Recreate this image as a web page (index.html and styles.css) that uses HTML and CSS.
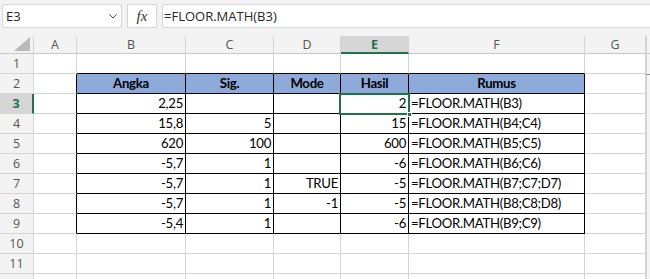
FILE: index.html
```html
<!DOCTYPE html>
<html>
<head>
<meta charset="utf-8">
<link rel="stylesheet" href="styles.css">
</head>
<body>
<div class="topbar">
  <div class="namebox"><span>E3</span>
    <svg class="chev" width="8" height="5" viewBox="0 0 8 5"><path d="M0.5 0.5 L4 4 L7.5 0.5" fill="none" stroke="#444" stroke-width="1"/></svg>
  </div>
  <div class="fxbox"><span class="fx">fx</span></div>
  <div class="formula">=FLOOR.MATH(B3)</div>
</div>
<div class="sheet">
  <div class="corner"><svg width="16" height="14" viewBox="0 0 16 14"><path d="M16 0 L16 14 L0 14 Z" fill="#b9b9b9"/></svg></div>
  <div class="ch">A</div><div class="ch">B</div><div class="ch">C</div><div class="ch">D</div><div class="ch sel">E</div><div class="ch">F</div><div class="ch">G</div><div class="strip sh"></div>

  <div class="rh">1</div><div class="c"></div><div class="c bt"></div><div class="c bt"></div><div class="c bt"></div><div class="c bt"></div><div class="c bt"></div><div class="c"></div><div class="strip"></div>

  <div class="rh">2</div><div class="c bl"></div><div class="c t hd">Angka</div><div class="c t hd">Sig.</div><div class="c t hd">Mode</div><div class="c t hd">Hasil</div><div class="c t hd">Rumus</div><div class="c"></div><div class="strip mark"></div>

  <div class="rh rsel">3</div><div class="c bl"></div><div class="c t r">2,25</div><div class="c t r"></div><div class="c t r"></div><div class="c t r active">2<span class="handle"></span></div><div class="c t">=FLOOR.MATH(B3)</div><div class="c"></div><div class="strip"></div>

  <div class="rh">4</div><div class="c bl"></div><div class="c t r">15,8</div><div class="c t r">5</div><div class="c t r"></div><div class="c t r">15</div><div class="c t">=FLOOR.MATH(B4;C4)</div><div class="c"></div><div class="strip"></div>

  <div class="rh">5</div><div class="c bl"></div><div class="c t r">620</div><div class="c t r">100</div><div class="c t r"></div><div class="c t r">600</div><div class="c t">=FLOOR.MATH(B5;C5)</div><div class="c"></div><div class="strip"></div>

  <div class="rh">6</div><div class="c bl"></div><div class="c t r">-5,7</div><div class="c t r">1</div><div class="c t r"></div><div class="c t r">-6</div><div class="c t">=FLOOR.MATH(B6;C6)</div><div class="c"></div><div class="strip"></div>

  <div class="rh">7</div><div class="c bl"></div><div class="c t r">-5,7</div><div class="c t r">1</div><div class="c t r">TRUE</div><div class="c t r">-5</div><div class="c t">=FLOOR.MATH(B7;C7;D7)</div><div class="c"></div><div class="strip"></div>

  <div class="rh">8</div><div class="c bl"></div><div class="c t r">-5,7</div><div class="c t r">1</div><div class="c t r">-1</div><div class="c t r">-5</div><div class="c t">=FLOOR.MATH(B8;C8;D8)</div><div class="c"></div><div class="strip"></div>

  <div class="rh">9</div><div class="c bl"></div><div class="c t r">-5,4</div><div class="c t r">1</div><div class="c t r"></div><div class="c t r">-6</div><div class="c t">=FLOOR.MATH(B9;C9)</div><div class="c"></div><div class="strip"></div>

  <div class="rh">10</div><div class="c"></div><div class="c"></div><div class="c"></div><div class="c"></div><div class="c"></div><div class="c"></div><div class="c"></div><div class="strip"></div>

  <div class="rh">11</div><div class="c"></div><div class="c"></div><div class="c"></div><div class="c"></div><div class="c"></div><div class="c"></div><div class="c"></div><div class="strip"></div>

  <div class="rh"></div><div class="c"></div><div class="c"></div><div class="c"></div><div class="c"></div><div class="c"></div><div class="c"></div><div class="c"></div><div class="strip"></div>
</div>
</body>
</html>
```

FILE: styles.css
```css
* { box-sizing: border-box; }
html, body { margin: 0; padding: 0; }
body {
  width: 650px;
  height: 279px;
  overflow: hidden;
  background: #ffffff;
  font-family: "Open Sans", "Noto Sans", sans-serif;
  color: #222;
}
.topbar {
  height: 36px;
  background: #f3f3f3;
  display: flex;
  align-items: flex-start;
  padding: 4px 0 0 2px;
  gap: 5px;
}
.namebox {
  width: 120px;
  height: 24px;
  background: #fff;
  border: 1px solid #d6d6d6;
  display: flex;
  align-items: center;
  justify-content: space-between;
  padding: 0 4px 0 3px;
  font-size: 13px;
  color: #262626;
}
.chev { margin-top: 1px; }
.fxbox {
  width: 30px;
  height: 24px;
  background: #fff;
  border: 1px solid #d6d6d6;
  display: flex;
  align-items: center;
  justify-content: center;
}
.fx {
  font-family: "Liberation Serif", "DejaVu Serif", serif;
  font-style: italic;
  font-size: 15px;
  color: #333;
}
.formula {
  flex: 1;
  height: 24px;
  background: #fff;
  border: 1px solid #d6d6d6;
  border-right: none;
  display: flex;
  align-items: center;
  padding-left: 1px;
  font-size: 13px;
  color: #262626;
}
.sheet {
  display: grid;
  grid-template-columns: 34px 43px 109px 88px 67px 68px 176px 61px 4px;
  grid-template-rows: 18px repeat(12, 20px);
}
.corner {
  background: #f3f3f3;
  border-right: 1px solid #d4d4d4;
  border-bottom: 1px solid #c8c8c8;
  display: flex;
  align-items: flex-end;
  justify-content: flex-end;
  padding: 0 3px 2px 0;
}
.ch {
  background: #f3f3f3;
  border-right: 1px solid #d4d4d4;
  border-bottom: 1px solid #c8c8c8;
  display: flex;
  align-items: center;
  justify-content: center;
  font-size: 12.5px;
  color: #555;
}
.ch.sel {
  background: #d6d6d6;
  border-bottom: 2px solid #217346;
  color: #217346;
  font-weight: 700;
}
.rh {
  background: #f3f3f3;
  border-right: 1px solid #d4d4d4;
  border-bottom: 1px solid #d4d4d4;
  display: flex;
  align-items: center;
  justify-content: center;
  font-size: 12.5px;
  color: #555;
}
.rh.rsel {
  background: #d6d6d6;
  border-right: 2px solid #217346;
  color: #217346;
  font-weight: 700;
}
.strip {
  background: #f5f5f5;
  border-left: 1px solid #d4d4d4;
}
.strip.sh { border-bottom: 1px solid #c8c8c8; }
.strip.mark { border-top: 1px solid #8a8a8a; }
.c {
  border-right: 1px solid #d4d4d4;
  border-bottom: 1px solid #d4d4d4;
  display: flex;
  align-items: flex-end;
  padding: 0 2px 1px 2px;
  font-family: "Lato", "Liberation Sans", sans-serif;
  font-size: 13.2px;
  letter-spacing: -0.3px;
  line-height: 18px;
  color: #000;
  white-space: nowrap;
}
.c.r { justify-content: flex-end; }
.c.t { border-right-color: #000; border-bottom-color: #000; }
.c.bl { border-right-color: #000; }
.c.bt { border-bottom-color: #000; }
.c.hd {
  background: #8eaadb;
  justify-content: center;
  font-weight: 700;
}
.active { position: relative; }
.active::before {
  content: "";
  position: absolute;
  left: -2px;
  top: -1px;
  right: -2px;
  bottom: -2px;
  border: 2px solid #217346;
}
.handle {
  position: absolute;
  right: -4px;
  bottom: -4px;
  width: 5px;
  height: 5px;
  background: #217346;
  border: 1px solid #fff;
}
```
